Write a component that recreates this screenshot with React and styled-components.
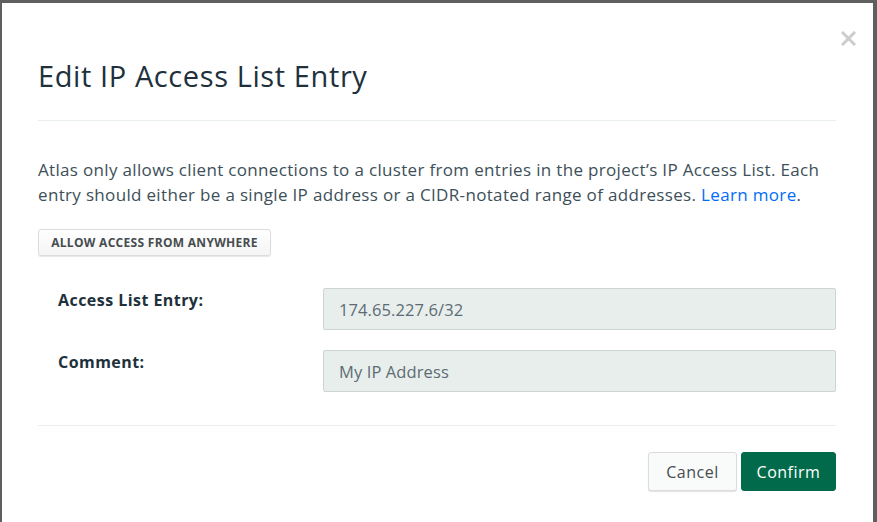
import React from "react";
import styled, { createGlobalStyle } from "styled-components";

const Global = createGlobalStyle`
  html, body { margin: 0; padding: 0; background: #5f5f5f; overflow: hidden; }
  body { font-family: "Open Sans", Lato, sans-serif; }
`;

const Backdrop = styled.div`
  width: 877px;
  height: 522px;
  padding: 3px 4px 0 2px;
  box-sizing: border-box;
  background: #5f5f5f;
  overflow: hidden;
`;

const Modal = styled.div`
  position: relative;
  background: #ffffff;
  height: 560px;
  padding: 0 37px 0 36px;
  box-sizing: border-box;
  display: flex;
  flex-direction: column;
`;

const Close = styled.button`
  position: absolute;
  top: 24px;
  right: 14px;
  width: 22px;
  height: 22px;
  border: 0;
  background: none;
  padding: 0;
  cursor: pointer;
  display: flex;
  align-items: center;
  justify-content: center;
`;

const Title = styled.h2`
  margin: 0;
  padding: 54px 0 26px;
  font-size: 29px;
  line-height: 37px;
  font-weight: 400;
  letter-spacing: 0.6px;
  color: #21313c;
  border-bottom: 1px solid #e7eeec;
`;

const Body = styled.div`
  padding-top: 36px;
  display: flex;
  flex-direction: column;
  border-bottom: 1px solid #e7eeec;
  padding-bottom: 33px;
`;

const Paragraph = styled.p`
  margin: 0;
  font-size: 17px;
  line-height: 25px;
  letter-spacing: 0.33px;
  color: #3d4f58;
`;

const Link = styled.a`
  color: #016bf8;
  text-decoration: none;
`;

const SmallButton = styled.button`
  align-self: flex-start;
  margin-top: 22px;
  height: 27px;
  width: 233px;
  padding: 0;
  font-family: inherit;
  font-size: 12px;
  font-weight: 700;
  letter-spacing: 0.3px;
  color: #464c4f;
  background: linear-gradient(#ffffff, #f4f4f4);
  border: 1px solid #dcdcdc;
  border-radius: 3px;
  box-shadow: 0 1px 1px rgba(0, 0, 0, 0.1);
`;

const Fields = styled.div`
  margin-top: 32px;
  display: flex;
  flex-direction: column;
  gap: 20px;
`;

const Row = styled.div`
  display: grid;
  grid-template-columns: 285px 1fr;
  align-items: start;
`;

const Label = styled.label`
  padding-left: 20px;
  padding-top: 2px;
  font-size: 16px;
  line-height: 20px;
  font-weight: 700;
  letter-spacing: 0.45px;
  color: #21313c;
`;

const Input = styled.div`
  height: 42px;
  box-sizing: border-box;
  padding: 0 15px;
  display: flex;
  align-items: center;
  font-size: 16.5px;
  letter-spacing: 0.1px;
  color: #5d6c74;
  background: #e7eeec;
  border: 1px solid #cfd4d3;
  border-radius: 2px;
`;

const Footer = styled.div`
  display: flex;
  justify-content: flex-end;
  gap: 4px;
  padding-top: 26px;
`;

const Button = styled.button`
  height: 39px;
  padding: 0;
  font-family: inherit;
  font-size: 16px;
  letter-spacing: 0.5px;
  border-radius: 3px;
  cursor: pointer;
  color: ${(p) => (p.$primary ? "#ffffff" : "#464c4f")};
  background: ${(p) => (p.$primary ? "#016a4a" : "#f9fbfa")};
  border: 1px solid ${(p) => (p.$primary ? "#016a4a" : "#dcdcdc")};
  box-shadow: ${(p) => (p.$primary ? "none" : "0 1px 1px rgba(0,0,0,0.12)")};
  width: ${(p) => (p.$primary ? "95px" : "89px")};
`;

export default function App() {
  return (
    <>
      <Global />
      <Backdrop>
        <Modal>
          <Close aria-label="Close">
            <svg width="15" height="15" viewBox="0 0 15 15">
              <path d="M2 2 L13 13 M13 2 L2 13" stroke="#cdcdcd" strokeWidth="3" strokeLinecap="square" />
            </svg>
          </Close>
          <Title>Edit IP Access List Entry</Title>
          <Body>
            <Paragraph>
              Atlas only allows client connections to a cluster from entries in the project’s IP Access List. Each
              <br />
              entry should either be a single IP address or a CIDR-notated range of addresses.{" "}
              <Link href="#">Learn more</Link>.
            </Paragraph>
            <SmallButton>ALLOW ACCESS FROM ANYWHERE</SmallButton>
            <Fields>
              <Row>
                <Label>Access List Entry:</Label>
                <Input>174.65.227.6/32</Input>
              </Row>
              <Row>
                <Label>Comment:</Label>
                <Input>My IP Address</Input>
              </Row>
            </Fields>
          </Body>
          <Footer>
            <Button>Cancel</Button>
            <Button $primary>Confirm</Button>
          </Footer>
        </Modal>
      </Backdrop>
    </>
  );
}
